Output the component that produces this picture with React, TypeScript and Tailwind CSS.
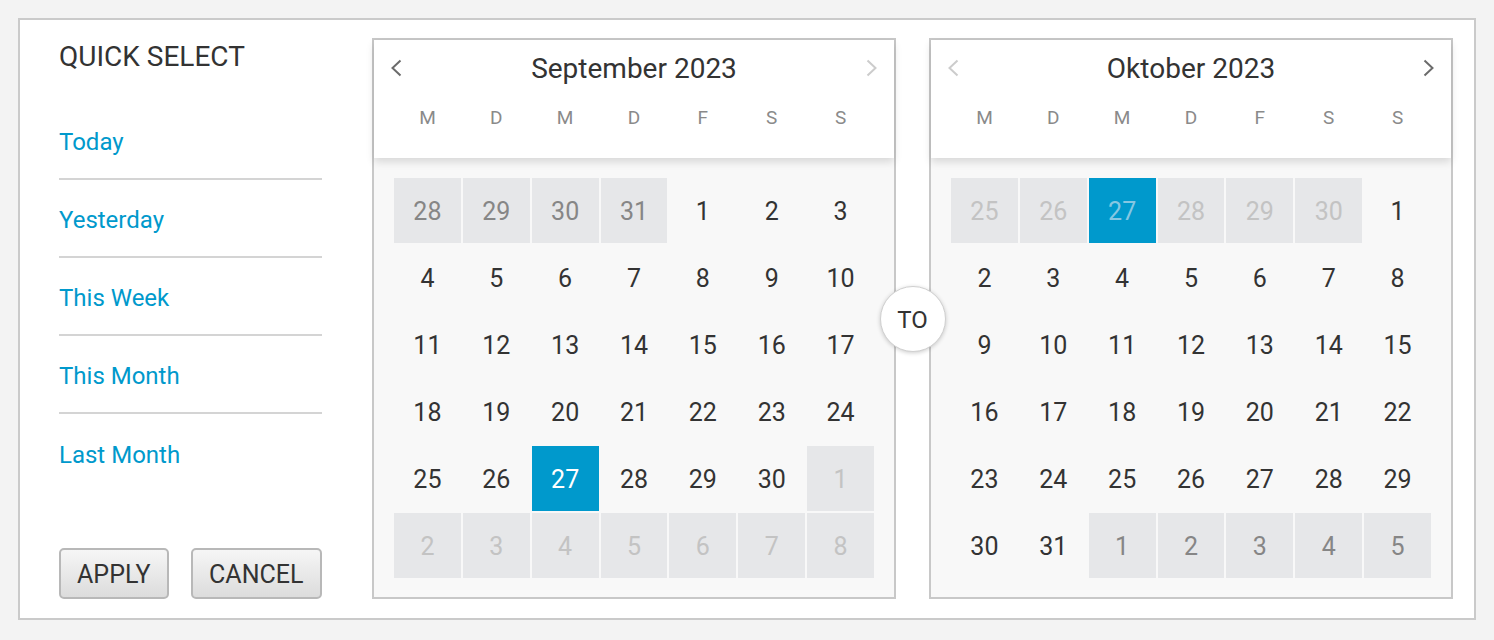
type Kind = 'n' | 'sel' | 'gd' | 'gl' | 'sl';
type Cell = [string, Kind];

const weekdays = ['M', 'D', 'M', 'D', 'F', 'S', 'S'];

const range = (a: number, b: number, k: Kind): Cell[] => {
    const out: Cell[] = [];
    for (let i = a; i <= b; i++) out.push([String(i), k]);
    return out;
};

const september: Cell[] = [
    ...range(28, 31, 'gd'),
    ...range(1, 26, 'n'),
    ['27', 'sel'],
    ...range(28, 30, 'n'),
    ...range(1, 8, 'gl'),
];

const october: Cell[] = [
    ...range(25, 26, 'gl'),
    ['27', 'sl'],
    ...range(28, 30, 'gl'),
    ...range(1, 31, 'n'),
    ...range(1, 5, 'gd'),
];

const cellClass: Record<Kind, string> = {
    n: 'text-[#333333]',
    sel: 'bg-[#0099cc] text-white',
    gd: 'bg-[#e6e7e9] text-[#868686]',
    gl: 'bg-[#e6e7e9] text-[#c3c3c3]',
    sl: 'bg-[#0099cc] text-[#86c7e2]',
};

const Chevron = ({ dir, active }: { dir: 'left' | 'right'; active: boolean }) => (
    <svg width="12" height="18" viewBox="0 0 12 18" fill="none">
        <path
            d={dir === 'left' ? 'M10.5 1.5 L2.5 9 L10.5 16.5' : 'M1.5 1.5 L9.5 9 L1.5 16.5'}
            stroke={active ? '#6b6b6b' : '#cccccc'}
            strokeWidth="2"
        />
    </svg>
);

const Calendar = ({ title, days, prev, next }: { title: string; days: Cell[]; prev: boolean; next: boolean }) => (
    <div className="w-[524px] shrink-0 border-2 border-[#c8c8c8] bg-[#f8f8f8] flex flex-col">
        <div className="h-[118px] bg-white relative z-10 shadow-[0_4px_8px_rgba(0,0,0,0.13)]">
            <div className="h-[56px] flex items-center justify-between px-[16px]">
                <Chevron dir="left" active={prev} />
                <div className="pt-[2px] text-[28px] text-[#333333]">{title}</div>
                <Chevron dir="right" active={next} />
            </div>
            <div className="h-[44px] grid grid-cols-7 gap-[2px] px-[20px] items-center">
                {weekdays.map((d, i) => (
                    <div key={i} className="text-center text-[19px] text-[#8a8a8a]">
                        {d}
                    </div>
                ))}
            </div>
        </div>
        <div className="grid grid-cols-7 auto-rows-[65px] gap-[2px] px-[20px] pt-[20px]">
            {days.map(([d, k], i) => (
                <div key={i} className={`flex items-center justify-center pt-[3px] text-[25px] ${cellClass[k]}`}>
                    {d}
                </div>
            ))}
        </div>
    </div>
);

const links = ['Today', 'Yesterday', 'This Week', 'This Month', 'Last Month'];

const App = () => {
    return (
        <div className="min-h-[640px] bg-[#f3f3f3] p-[18px] font-['Roboto',sans-serif]">
            <div className="h-[602px] flex border-2 border-[#cacaca] bg-white pt-[18px] pb-[19px] pl-[39px] pr-[20px]">
                <div className="w-[263px] mr-[50px] flex flex-col">
                    <div className="h-[64px] pt-[1px] text-[28px] leading-[36px] text-[#333333]">QUICK SELECT</div>
                    {links.map((l, i) => (
                        <div
                            key={l}
                            className={`h-[78px] flex items-center pt-[3px] text-[24px] text-[#0099cc] ${
                                i < links.length - 1 ? 'border-b-2 border-[#d4d4d4]' : ''
                            }`}
                        >
                            {l}
                        </div>
                    ))}
                    <div className="mt-auto flex gap-[22px]">
                        <button className="w-[110px] h-[51px] pt-[2px] rounded-[5px] border-2 border-[#b8b8b8] bg-gradient-to-b from-[#f6f6f6] to-[#dcdcdc] text-[25px] text-[#333333]">
                            APPLY
                        </button>
                        <button className="w-[132px] h-[51px] pt-[2px] rounded-[5px] border-2 border-[#b8b8b8] bg-gradient-to-b from-[#f6f6f6] to-[#dcdcdc] text-[25px] text-[#333333]">
                            CANCEL
                        </button>
                    </div>
                </div>
                <div className="relative flex gap-[33px]">
                    <Calendar title="September 2023" days={september} prev={true} next={false} />
                    <Calendar title="Oktober 2023" days={october} prev={false} next={true} />
                    <div className="absolute left-1/2 top-1/2 -translate-x-1/2 -translate-y-1/2 z-20 w-[66px] h-[66px] pt-[2px] rounded-full bg-white border border-[#d0d0d0] shadow-[0_1px_4px_rgba(0,0,0,0.2)] flex items-center justify-center text-[24px] text-[#333333]">
                        TO
                    </div>
                </div>
            </div>
        </div>
    );
};

export default App;
